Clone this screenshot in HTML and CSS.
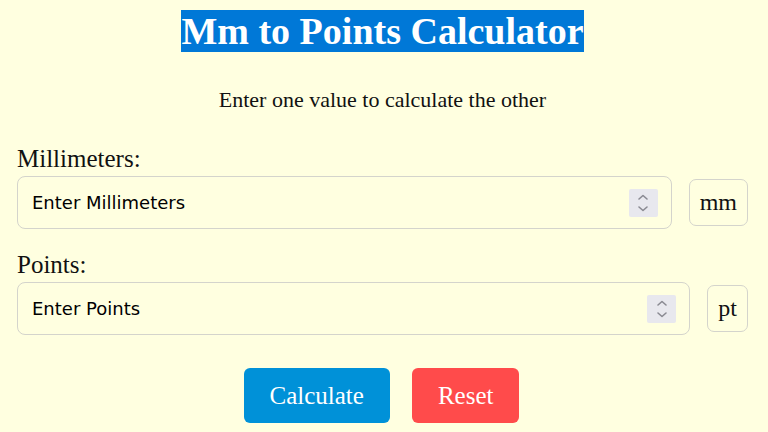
FILE: index.html
```html
<!DOCTYPE html>
<html lang="en">
<head>
  <meta charset="UTF-8">
  <meta name="viewport" content="width=device-width, initial-scale=1.0">
  <title>Mm to Points Calculator</title>
  <link rel="stylesheet" href="styles.css">
</head>
<body>

  <!-- Converter -->
  <div class="calc">
    <h1 class="calc-title"><span>Mm to Points Calculator</span></h1>
    <p class="calc-hint">Enter one value to calculate the other</p>

    <!-- Millimeters -->
    <div class="field field-first">
      <label for="mm">Millimeters:</label>
      <div class="field-row">
        <div class="input-box">
          <input type="text" id="mm" placeholder="Enter Millimeters">
          <span class="spin">
            <svg width="12" height="20" viewBox="0 0 12 20"><path d="M2 6 L6 2.5 L10 6 M2 14 L6 17.5 L10 14" fill="none" stroke="#8a8a92" stroke-width="1.6" stroke-linecap="round" stroke-linejoin="round"/></svg>
          </span>
        </div>
        <span class="unit">mm</span>
      </div>
    </div>

    <!-- Points -->
    <div class="field">
      <label for="pt">Points:</label>
      <div class="field-row">
        <div class="input-box">
          <input type="text" id="pt" placeholder="Enter Points">
          <span class="spin">
            <svg width="12" height="20" viewBox="0 0 12 20"><path d="M2 6 L6 2.5 L10 6 M2 14 L6 17.5 L10 14" fill="none" stroke="#8a8a92" stroke-width="1.6" stroke-linecap="round" stroke-linejoin="round"/></svg>
          </span>
        </div>
        <span class="unit">pt</span>
      </div>
    </div>

    <div class="actions">
      <button class="btn btn-calc" onclick="calculate()">Calculate</button>
      <button class="btn btn-reset" onclick="resetFields()">Reset</button>
    </div>
  </div>

  <script>
    const PT_PER_MM = 72 / 25.4;

    function calculate() {
      const mm = document.getElementById("mm");
      const pt = document.getElementById("pt");
      if (mm.value !== "") {
        pt.value = (parseFloat(mm.value) * PT_PER_MM).toFixed(4);
      } else if (pt.value !== "") {
        mm.value = (parseFloat(pt.value) / PT_PER_MM).toFixed(4);
      }
    }

    function resetFields() {
      document.getElementById("mm").value = "";
      document.getElementById("pt").value = "";
    }
  </script>

</body>
</html>
```

FILE: styles.css
```css
/* Base */
* { box-sizing: border-box; }
body {
  margin: 0;
  background: #ffffe0;
  color: #111;
  font-family: "Liberation Serif", "Times New Roman", serif;
}

.calc {
  padding: 9px 20px 0 17px;
}

/* Heading */
.calc-title {
  margin: 0;
  text-align: center;
  font-size: 38px;
  font-weight: bold;
  line-height: normal;
}
.calc-title span {
  background: #0078d7;
  color: #fff;
}
.calc-hint {
  margin: 34px 0 0;
  text-align: center;
  font-size: 22px;
}

/* Fields */
.field { margin-top: 22px; }
.field-first { margin-top: 32px; }
.field label {
  display: block;
  font-size: 25px;
  margin-bottom: 3px;
}
.field-row {
  display: flex;
  align-items: center;
  gap: 17px;
}
.input-box {
  flex: 1;
  height: 53px;
  display: flex;
  align-items: center;
  padding: 0 13px 0 12px;
  border: 1px solid #d4d4cc;
  border-radius: 8px;
}
.input-box input {
  flex: 1;
  min-width: 0;
  border: none;
  outline: none;
  background: transparent;
  font-family: "DejaVu Sans", Verdana, sans-serif;
  font-size: 18px;
  color: #000;
}
.input-box input::placeholder { color: #000; }
.spin {
  width: 29px;
  height: 28px;
  display: flex;
  align-items: center;
  justify-content: center;
  background: #e8e8ee;
  border-radius: 2px;
}
.unit {
  height: 47px;
  display: flex;
  align-items: center;
  padding: 0 10px;
  border: 1px solid #d4d4cc;
  border-radius: 7px;
  font-size: 24px;
}

/* Buttons */
.actions {
  display: flex;
  justify-content: center;
  gap: 22px;
  margin-top: 33px;
  padding-right: 2px;
}
.btn {
  height: 55px;
  padding: 0 26px;
  border: none;
  border-radius: 6px;
  color: #fff;
  font-family: "Liberation Serif", "Times New Roman", serif;
  font-size: 25px;
  cursor: pointer;
}
.btn-calc { background: #0091d8; }
.btn-reset { background: #ff4b4b; }
```
